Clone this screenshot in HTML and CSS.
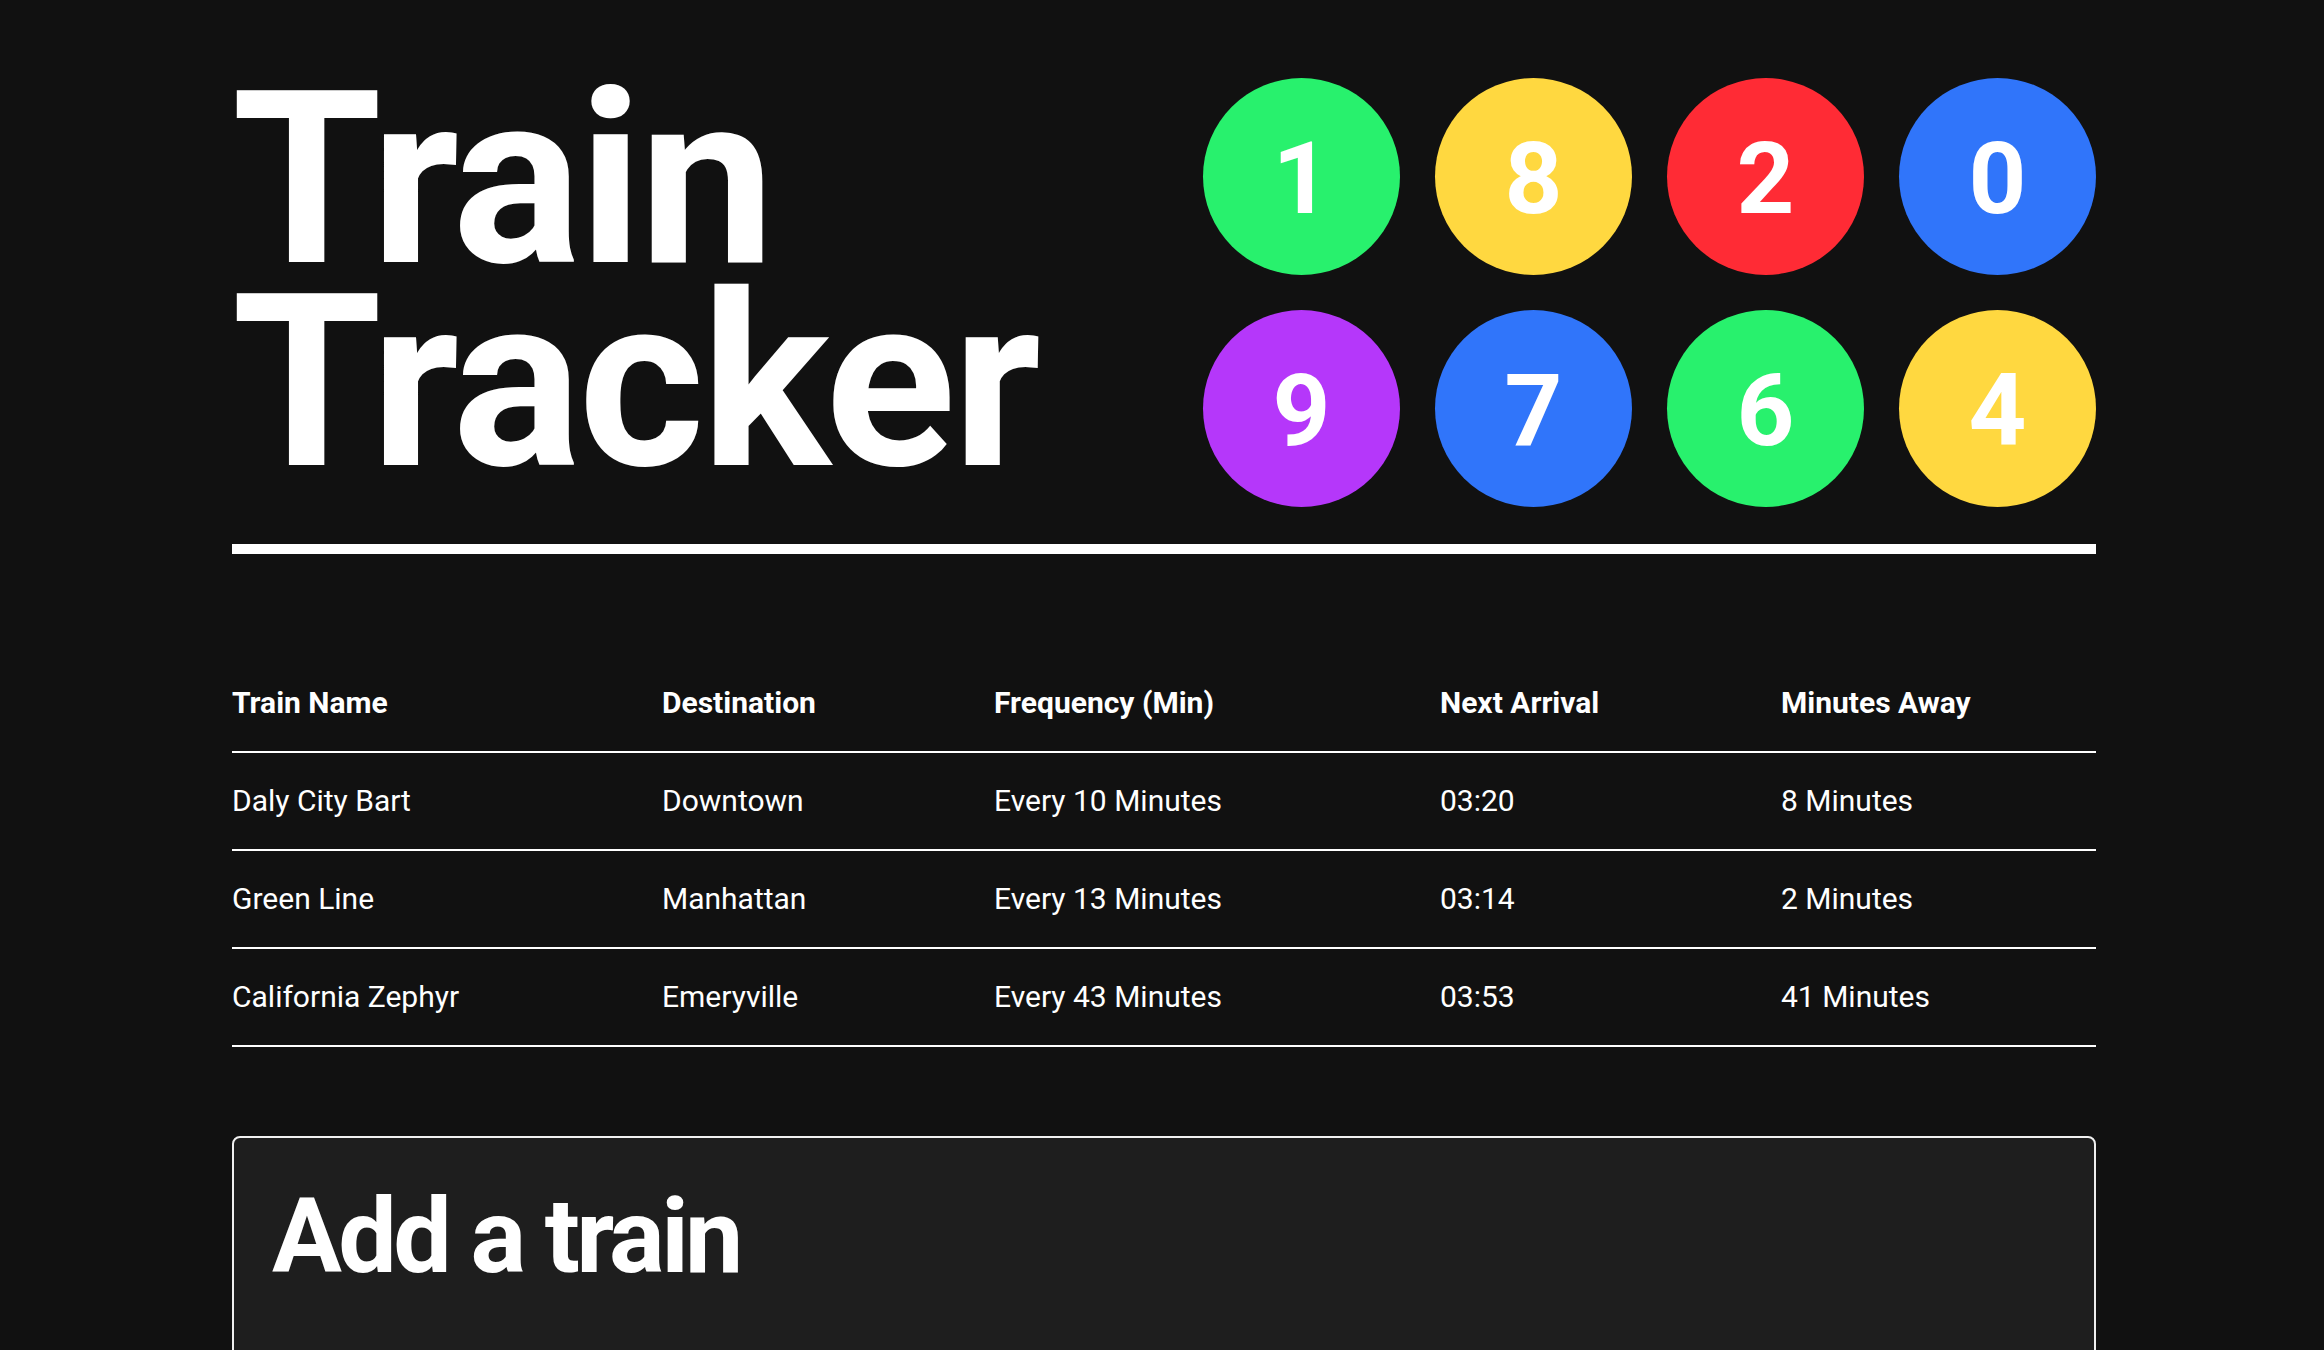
FILE: index.html
```html
<!DOCTYPE html>
<html lang="en">
<head>
<meta charset="utf-8">
<title>Train Tracker</title>
<link rel="stylesheet" href="styles.css">
</head>
<body>
<div class="container">
  <header class="masthead">
    <h1 class="title">Train<br>Tracker</h1>
    <div class="bullets">
      <span class="bullet green">1</span>
      <span class="bullet yellow">8</span>
      <span class="bullet red">2</span>
      <span class="bullet blue">0</span>
      <span class="bullet purple">9</span>
      <span class="bullet blue">7</span>
      <span class="bullet green">6</span>
      <span class="bullet yellow">4</span>
    </div>
  </header>
  <hr class="rule">

  <table class="schedule">
    <thead>
      <tr>
        <th class="c-name">Train Name</th>
        <th class="c-dest">Destination</th>
        <th class="c-freq">Frequency (Min)</th>
        <th class="c-next">Next Arrival</th>
        <th class="c-away">Minutes Away</th>
      </tr>
    </thead>
    <tbody>
      <tr><td>Daly City Bart</td><td>Downtown</td><td>Every 10 Minutes</td><td>03:20</td><td>8 Minutes</td></tr>
      <tr><td>Green Line</td><td>Manhattan</td><td>Every 13 Minutes</td><td>03:14</td><td>2 Minutes</td></tr>
      <tr><td>California Zephyr</td><td>Emeryville</td><td>Every 43 Minutes</td><td>03:53</td><td>41 Minutes</td></tr>
    </tbody>
  </table>

  <section class="card">
    <h2 class="card-title">Add a train</h2>
    <form class="form-grid">
      <div class="field">
        <label class="label" for="name">Train Name</label>
        <input class="input" id="name" type="text">
      </div>
      <div class="field">
        <label class="label" for="dest">Destination</label>
        <input class="input" id="dest" type="text">
      </div>
      <div class="field">
        <label class="label" for="first">First Train Time (HH:mm)</label>
        <input class="input" id="first" type="text">
      </div>
      <div class="field">
        <label class="label" for="freq">Frequency (min)</label>
        <input class="input" id="freq" type="text">
      </div>
    </form>
  </section>
</div>
</body>
</html>
```

FILE: styles.css
```css
* { box-sizing: border-box; }

html, body {
  margin: 0;
  padding: 0;
  background: #111111;
  color: #ffffff;
  font-family: Roboto, "Liberation Sans", Arial, sans-serif;
}

body {
  padding: 78px 0 0 232px;
}

.container {
  width: 1864px;
}

.masthead {
  display: flex;
  justify-content: space-between;
  align-items: flex-start;
}

.title {
  margin: 0;
  font-size: 242px;
  line-height: 203px;
  font-weight: 700;
  letter-spacing: -3.2px;
}

.bullets {
  display: grid;
  grid-template-columns: repeat(4, 197px);
  grid-auto-rows: 197px;
  gap: 35px;
}

.bullet {
  width: 197px;
  height: 197px;
  border-radius: 50%;
  display: flex;
  align-items: center;
  justify-content: center;
  font-size: 101px;
  font-weight: 700;
  line-height: 1;
  color: #ffffff;
  padding-top: 3px;
}

.green { background: #28f16d; }
.yellow { background: #ffd840; }
.red { background: #ff2b35; }
.blue { background: #3075fa; }
.purple { background: #b537fa; }

.rule {
  margin: 37px 0 0;
  border: 0;
  height: 10px;
  background: #ffffff;
}

.schedule {
  width: 100%;
  margin-top: 101px;
  border-collapse: collapse;
  table-layout: fixed;
  font-size: 30px;
  line-height: 46px;
}

.schedule th,
.schedule td {
  text-align: left;
  padding: 25px 0;
  border-bottom: 2px solid #ffffff;
  white-space: nowrap;
}

.schedule th {
  font-weight: 700;
}

.schedule td {
  font-weight: 400;
}

.c-name { width: 430px; }
.c-dest { width: 332px; }
.c-freq { width: 446px; }
.c-next { width: 341px; }
.c-away { width: auto; }

.card {
  margin-top: 89px;
  background: #1e1e1e;
  border: 2px solid #f0f0f0;
  border-radius: 8px;
  padding: 36px 38px 40px;
}

.card-title {
  margin: 0 0 43px;
  font-size: 104px;
  line-height: 126px;
  font-weight: 700;
  letter-spacing: -3.6px;
}

.form-grid {
  display: grid;
  grid-template-columns: 1fr 1fr;
  column-gap: 75px;
  row-gap: 30px;
}

.field {
  display: flex;
  flex-direction: column;
  gap: 12px;
}

.label {
  font-size: 30px;
  line-height: 45px;
  font-weight: 700;
}

.input {
  height: 64px;
  font-size: 28px;
  padding: 0 16px;
  border: 2px solid #ffffff;
  border-radius: 6px;
  background: #111111;
  color: #ffffff;
  font-family: inherit;
}
```
